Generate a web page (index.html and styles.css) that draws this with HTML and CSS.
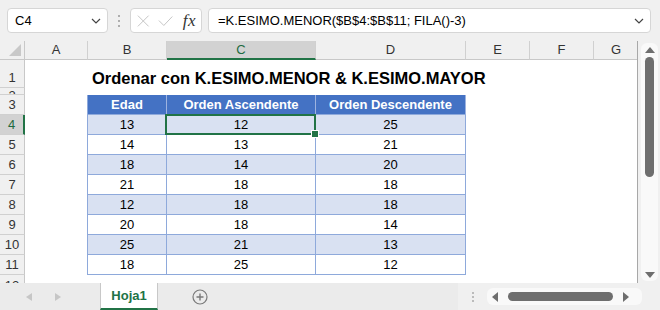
FILE: index.html
```html
<!DOCTYPE html>
<html lang="es">
<head>
<meta charset="utf-8">
<title>Hoja1</title>
<link rel="stylesheet" href="styles.css">
</head>
<body>
<div class="app">
  <div class="fbar">
    <div class="namebox">
      <span class="nb-text">C4</span>
      <svg class="chev" width="10" height="6" viewBox="0 0 10 6"><path d="M1 1l4 4 4-4" fill="none" stroke="#444" stroke-width="1.2"/></svg>
    </div>
    <div class="vdots">
      <svg width="4" height="14" viewBox="0 0 4 14"><circle cx="2" cy="2" r="1" fill="#999"/><circle cx="2" cy="7" r="1" fill="#999"/><circle cx="2" cy="12" r="1" fill="#999"/></svg>
    </div>
    <div class="fxbox">
      <svg width="14" height="14" viewBox="0 0 14 14"><path d="M1 1l12 12M13 1L1 13" fill="none" stroke="#c4c4c4" stroke-width="1.1"/></svg>
      <svg width="17" height="12" viewBox="0 0 17 12"><path d="M1 5.5l5.5 5.5L16 1" fill="none" stroke="#c4c4c4" stroke-width="1.1"/></svg>
      <span class="fx">fx</span>
    </div>
    <div class="formula">
      <span class="f-text">=K.ESIMO.MENOR($B$4:$B$11; FILA()-3)</span>
      <svg class="chev" width="10" height="6" viewBox="0 0 10 6"><path d="M1 1l4 4 4-4" fill="none" stroke="#444" stroke-width="1.2"/></svg>
    </div>
  </div>

  <div class="main">
    <div class="grid">
      <div class="corner"><svg width="12" height="12" viewBox="0 0 12 12"><path d="M12 0V12H0Z" fill="#c8c8c8"/></svg></div>
      <div class="ch">A</div>
      <div class="ch">B</div>
      <div class="ch ch-sel">C</div>
      <div class="ch">D</div>
      <div class="ch">E</div>
      <div class="ch">F</div>
      <div class="ch ch-last">G</div>

      <div class="rh r-1">1</div>
      <div class="rh r-2"><span class="clip"><span class="num">2</span></span></div>
      <div class="rh">3</div>
      <div class="rh rh-sel">4</div>
      <div class="rh">5</div>
      <div class="rh">6</div>
      <div class="rh">7</div>
      <div class="rh">8</div>
      <div class="rh">9</div>
      <div class="rh">10</div>
      <div class="rh">11</div>
      <div class="rh r-12"><span class="clip"><span class="num">12</span></span></div>

      <div class="sheet"></div>

      <div class="title">Ordenar con K.ESIMO.MENOR &amp; K.ESIMO.MAYOR</div>

      <div class="tbl">
        <div class="th">Edad</div><div class="th">Orden Ascendente</div><div class="th">Orden Descendente</div>
        <div class="td alt">13</div><div class="td alt sel">12</div><div class="td alt">25</div>
        <div class="td">14</div><div class="td">13</div><div class="td">21</div>
        <div class="td alt">18</div><div class="td alt">14</div><div class="td alt">20</div>
        <div class="td">21</div><div class="td">18</div><div class="td">18</div>
        <div class="td alt">12</div><div class="td alt">18</div><div class="td alt">18</div>
        <div class="td">20</div><div class="td">18</div><div class="td">14</div>
        <div class="td alt">25</div><div class="td alt">21</div><div class="td alt">13</div>
        <div class="td">18</div><div class="td">25</div><div class="td">12</div>
      </div>
    </div>

    <div class="vscroll">
      <div class="vtrack">
        <svg width="10" height="6" viewBox="0 0 10 6"><path d="M5 0L10 6H0Z" fill="#6e6e6e"/></svg>
        <div class="vthumb"></div>
        <div class="vspace"></div>
        <svg width="10" height="6" viewBox="0 0 10 6"><path d="M0 0H10L5 6Z" fill="#6e6e6e"/></svg>
      </div>
    </div>
  </div>

  <div class="tabbar">
    <div class="navs">
      <svg width="6" height="8" viewBox="0 0 6 8"><path d="M6 0V8L0 4Z" fill="#c6c6c6"/></svg>
      <svg width="6" height="8" viewBox="0 0 6 8"><path d="M0 0V8L6 4Z" fill="#c6c6c6"/></svg>
    </div>
    <div class="tab">Hoja1</div>
    <div class="addsheet">
      <svg width="16" height="16" viewBox="0 0 16 16"><circle cx="8" cy="8" r="7" fill="none" stroke="#7a7a7a" stroke-width="1.2"/><path d="M8 4.5v7M4.5 8h7" stroke="#7a7a7a" stroke-width="1.4"/></svg>
    </div>
    <div class="spacer"></div>
    <div class="hscroll">
      <div class="hdots">
        <svg width="4" height="12" viewBox="0 0 4 12"><circle cx="2" cy="2" r="1" fill="#aaa"/><circle cx="2" cy="6" r="1" fill="#aaa"/><circle cx="2" cy="10" r="1" fill="#aaa"/></svg>
      </div>
      <div class="htrack">
        <svg width="6" height="10" viewBox="0 0 6 10"><path d="M6 0V10L0 5Z" fill="#6e6e6e"/></svg>
        <div class="hthumb"></div>
        <svg width="6" height="10" viewBox="0 0 6 10"><path d="M0 0V10L6 5Z" fill="#6e6e6e"/></svg>
      </div>
    </div>
  </div>
</div>
</body>
</html>
```

FILE: styles.css
```css
* { box-sizing: border-box; }
html, body { margin: 0; padding: 0; }
body {
  width: 660px;
  height: 310px;
  overflow: hidden;
  font-family: "Liberation Sans", Arial, sans-serif;
  background: #f0f0f0;
}
.app {
  width: 660px;
  height: 310px;
  display: flex;
  flex-direction: column;
  background: #f0f0f0;
}

/* formula bar */
.fbar {
  height: 41px;
  flex: none;
  display: flex;
  align-items: flex-start;
  padding: 8px 0 0 7px;
}
.namebox {
  width: 101px;
  height: 25px;
  background: #fff;
  border: 1px solid #d6d6d6;
  border-radius: 4px;
  display: flex;
  align-items: center;
  justify-content: space-between;
  padding: 0 6px 0 7px;
  font-size: 13px;
  color: #000;
}
.vdots {
  width: 22px;
  height: 25px;
  display: flex;
  align-items: center;
  justify-content: center;
}
.fxbox {
  width: 72px;
  height: 25px;
  background: #fff;
  border: 1px solid #d6d6d6;
  border-radius: 4px;
  display: flex;
  align-items: center;
  padding: 0 5px 0 6px;
  gap: 8px;
}
.fx {
  font-family: "Liberation Serif", "DejaVu Serif", serif;
  font-style: italic;
  font-size: 17px;
  color: #333;
  margin-left: 2px;
  letter-spacing: 0.5px;
}
.formula {
  width: 443px;
  height: 25px;
  margin-left: 6px;
  background: #fff;
  border: 1px solid #d6d6d6;
  border-radius: 4px;
  display: flex;
  align-items: center;
  justify-content: space-between;
  padding: 0 6px 0 9px;
  font-size: 13px;
  color: #000;
}

/* main sheet */
.main {
  height: 242px;
  flex: none;
  display: flex;
}
.grid {
  width: 638px;
  height: 242px;
  display: grid;
  grid-template-columns: 25px 63px 79px 149px 150px 64px 64px 44px;
  grid-template-rows: 19px 28px 7px repeat(9, 20px) 8px;
  background: #fff;
  border-right: 1px solid #a8a8a8;
  overflow: hidden;
}
.corner {
  grid-row: 1;
  grid-column: 1;
  background: #f0f0f0;
  border-right: 1px solid #c8c8c8;
  border-bottom: 1px solid #c8c8c8;
  display: flex;
  align-items: flex-end;
  justify-content: flex-end;
  padding: 0 3px 3px 0;
}
.ch {
  grid-row: 1;
  background: #f0f0f0;
  border-right: 1px solid #d0d0d0;
  border-bottom: 1px solid #c8c8c8;
  font-size: 13px;
  color: #333;
  text-align: center;
  line-height: 18px;
}
.ch-last { border-right: none; }
.ch-sel {
  background: #d2d2d2;
  color: #1e6b41;
  border-bottom: 2px solid #217346;
}
.rh {
  grid-column: 1;
  background: #f0f0f0;
  border-right: 1px solid #c8c8c8;
  border-bottom: 1px solid #d0d0d0;
  font-size: 13px;
  color: #333;
  text-align: center;
  line-height: 19px;
  overflow: hidden;
}
.r-1 { line-height: 36px; }
.clip {
  display: block;
  height: 6px;
  overflow: hidden;
}
.num {
  display: block;
  line-height: 13px;
  margin-top: 1px;
}
.r-12 { border-bottom: none; }
.r-12 .clip { height: 8px; }
.r-12 .num { margin-top: 4px; }
.rh-sel {
  background: #d2d2d2;
  color: #1e6b41;
  border-right: 2px solid #217346;
}
.sheet {
  grid-row: 2 / 14;
  grid-column: 2 / 9;
  background: #fff;
}

.title {
  grid-row: 2;
  grid-column: 3 / 9;
  font-weight: bold;
  font-size: 16.5px;
  color: #000;
  padding-left: 4px;
  line-height: 36px;
  white-space: nowrap;
}

.tbl {
  grid-row: 4 / 13;
  grid-column: 3 / 6;
  display: grid;
  grid-template-columns: 79px 149px 150px;
  grid-auto-rows: 20px;
  border-left: 1px solid #8ea9db;
  margin-left: -1px;
}
.th, .td {
  border-right: 1px solid #8ea9db;
  border-bottom: 1px solid #8ea9db;
  text-align: center;
  font-size: 13px;
  line-height: 19px;
}
.th {
  background: #4472c4;
  color: #fff;
  font-weight: bold;
  border-right-color: #9db3e0;
}
.th:last-child { border-right-color: #8ea9db; }
.td { background: #fff; color: #000; }
.td.alt { background: #d9e1f2; }
.sel { position: relative; }
.sel::after {
  content: "";
  position: absolute;
  top: -1px;
  left: -2px;
  right: -1px;
  bottom: -1px;
  border: 2px solid #217346;
}
.sel::before {
  content: "";
  position: absolute;
  right: -4px;
  bottom: -4px;
  width: 6px;
  height: 6px;
  background: #217346;
  border: 1px solid #fff;
  z-index: 2;
}

/* vertical scrollbar */
.vscroll {
  width: 22px;
  height: 242px;
  padding: 2px 2px 2px 3px;
}
.vtrack {
  height: 100%;
  background: #f9f9f9;
  border-radius: 6px;
  display: flex;
  flex-direction: column;
  align-items: center;
  padding: 4px 0 3px;
}
.vthumb {
  width: 9px;
  height: 120px;
  margin-top: 4px;
  background: #6e6e6e;
  border-radius: 5px;
}
.vspace { flex: 1; }

/* tab bar */
.tabbar {
  height: 27px;
  flex: none;
  display: flex;
  align-items: stretch;
  background: #ebebeb;
}
.navs {
  width: 100px;
  display: flex;
  align-items: center;
  gap: 23px;
  padding-left: 26px;
}
.tab {
  width: 58px;
  background: #fff;
  border-left: 1px solid #c8c8c8;
  border-right: 1px solid #c8c8c8;
  border-bottom: 2px solid #217346;
  color: #217346;
  font-weight: bold;
  font-size: 13px;
  text-align: center;
  line-height: 26px;
}
.addsheet {
  width: 84px;
  display: flex;
  align-items: center;
  justify-content: center;
}
.spacer { width: 216px; }
.hscroll {
  flex: 1;
  display: flex;
  align-items: center;
  background: #f0f0f0;
  padding-right: 18px;
}
.hdots {
  width: 29px;
  display: flex;
  justify-content: center;
}
.htrack {
  flex: 1;
  height: 17px;
  background: #f9f9f9;
  border-radius: 6px;
  display: flex;
  align-items: center;
  padding: 0 6px 0 5px;
  gap: 10px;
}
.hthumb {
  width: 105px;
  height: 9px;
  background: #6e6e6e;
  border-radius: 5px;
}
```
